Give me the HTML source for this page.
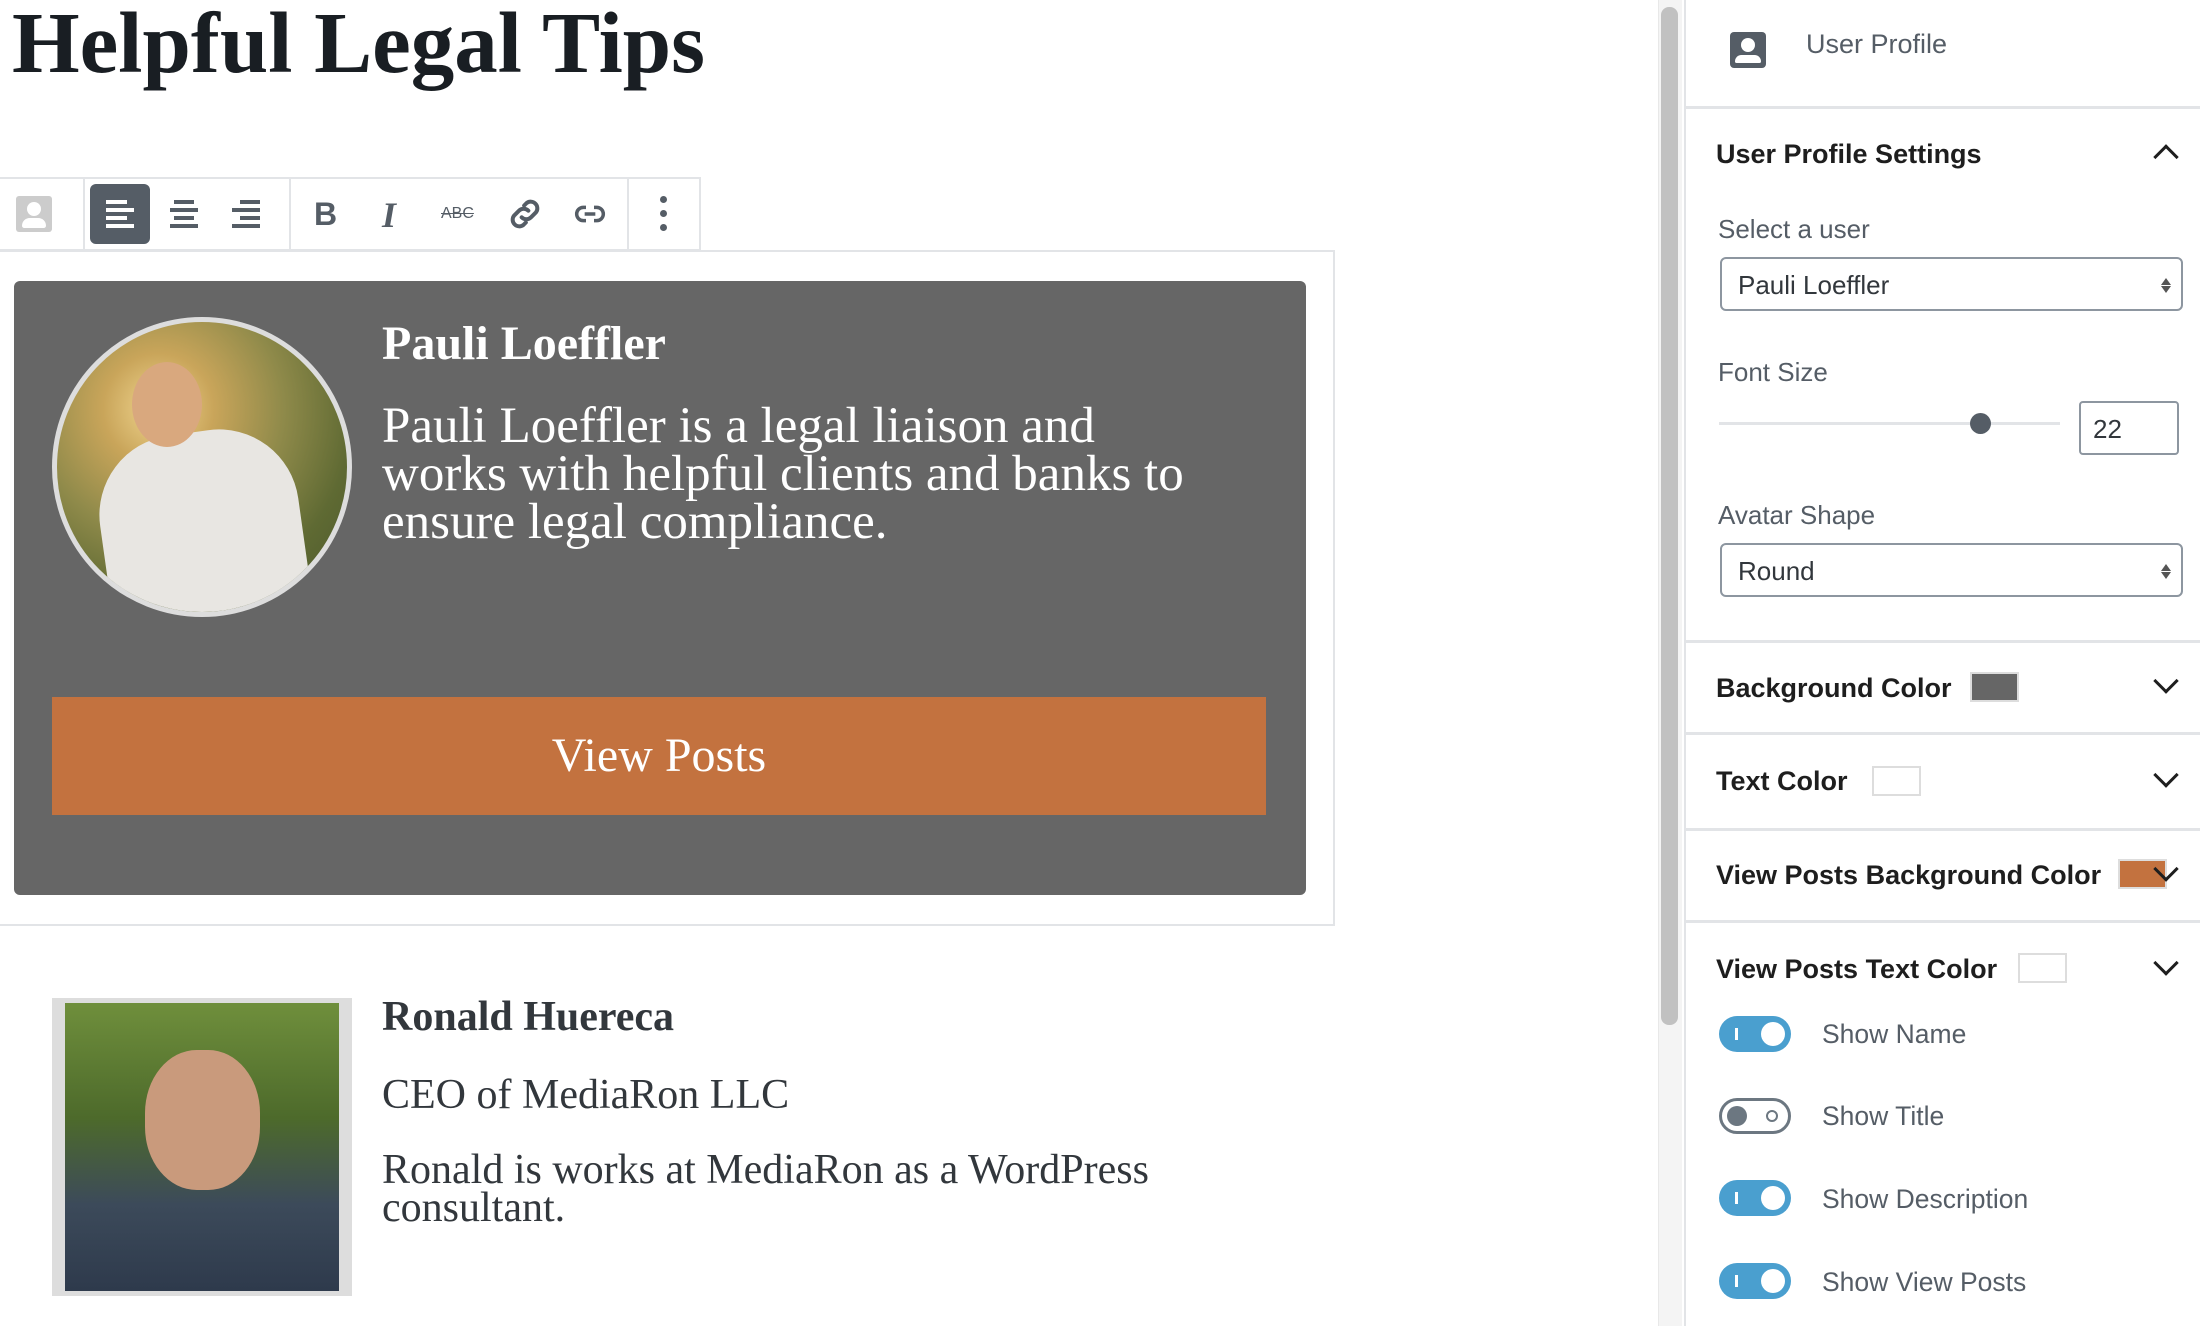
<!DOCTYPE html>
<html><head><meta charset="utf-8"><style>
*{margin:0;padding:0;box-sizing:border-box}
body{width:2200px;height:1326px;overflow:hidden;background:#fff;position:relative;font-family:"Liberation Sans",sans-serif}
.a{position:absolute;white-space:nowrap}
.serif{font-family:"Liberation Serif",serif}
.sb{color:#1e1e1e;font-weight:bold;font-size:27px}
.lbl{color:#555d66;font-size:26px}
.hr{position:absolute;left:1685px;width:515px;height:3px;background:#e2e4e7}
.sel{position:absolute;left:1720px;width:463px;height:54px;border:2px solid #8d96a0;border-radius:6px;font-size:26px;color:#32373c;padding:11px 16px}
.sel:after{content:"";position:absolute;right:10px;top:14px;border:5px solid transparent;border-bottom:7px solid #555;}
.sel:before{content:"";position:absolute;right:10px;top:27px;border:5px solid transparent;border-top:7px solid #555;}
.sw{position:absolute;height:30px;border:2px solid #ddd;width:49px}
.chev{position:absolute;left:2157px;width:18px;height:18px;border-right:3.5px solid #1e1e1e;border-bottom:3.5px solid #1e1e1e;transform:rotate(45deg)}
.tg{position:absolute;left:1719px;width:72px;height:36px;border-radius:18px;background:#4a9fcf}
.tg:after{content:"";position:absolute;right:6px;top:6px;width:24px;height:24px;border-radius:50%;background:#fff}
.tg:before{content:"";position:absolute;left:16px;top:12px;width:3px;height:12px;background:#fff}
.tl{position:absolute;left:1822px;font-size:26.5px;color:#555d66}
</style></head><body>
<div class="a serif" style="left:12px;top:-8px;font-size:87px;font-weight:bold;color:#191e23">Helpful Legal Tips</div>

<div class="a" style="left:0;top:250px;width:1335px;height:676px;border:2px solid #e2e4e7;border-left:none"></div>
<div class="a" style="left:0;top:177px;width:701px;height:74px;border:2px solid #e2e4e7;border-left:none;background:#fff"></div>
<div class="a" style="left:83px;top:179px;width:2px;height:70px;background:#e2e4e7"></div>
<div class="a" style="left:289px;top:179px;width:2px;height:70px;background:#e2e4e7"></div>
<div class="a" style="left:627px;top:179px;width:2px;height:70px;background:#e2e4e7"></div>
<div class="a" style="left:16px;top:196px;width:36px;height:36px;background:#ccc;border-radius:3px"></div>
<div class="a" style="left:27px;top:202px;width:14px;height:14px;background:#fff;border-radius:50%"></div>
<div class="a" style="left:22px;top:218px;width:24px;height:10px;background:#fff;border-radius:10px 10px 3px 3px"></div>
<div class="a" style="left:90px;top:184px;width:60px;height:60px;background:#555d66;border-radius:6px"></div>
<div class="a" style="left:106px;top:200px;width:21px;height:4px;background:#fff"></div>
<div class="a" style="left:106px;top:208px;width:28px;height:4px;background:#fff"></div>
<div class="a" style="left:106px;top:216px;width:21px;height:4px;background:#fff"></div>
<div class="a" style="left:106px;top:224px;width:28px;height:4px;background:#fff"></div>
<div class="a" style="left:174px;top:200px;width:20px;height:4px;background:#555d66"></div>
<div class="a" style="left:170px;top:208px;width:28px;height:4px;background:#555d66"></div>
<div class="a" style="left:174px;top:216px;width:20px;height:4px;background:#555d66"></div>
<div class="a" style="left:170px;top:224px;width:28px;height:4px;background:#555d66"></div>
<div class="a" style="left:240px;top:200px;width:20px;height:4px;background:#555d66"></div>
<div class="a" style="left:232px;top:208px;width:28px;height:4px;background:#555d66"></div>
<div class="a" style="left:240px;top:216px;width:20px;height:4px;background:#555d66"></div>
<div class="a" style="left:232px;top:224px;width:28px;height:4px;background:#555d66"></div>
<div class="a" style="left:314px;top:196px;font-size:32px;font-weight:bold;color:#555d66">B</div>
<div class="a serif" style="left:382px;top:194px;font-size:36px;font-style:italic;font-weight:bold;color:#555d66">I</div>
<div class="a" style="left:441px;top:205px;font-size:16px;color:#555d66;text-decoration:line-through">ABC</div>
<svg class="a" style="left:505px;top:194px" width="40" height="40" viewBox="0 0 24 24"><path d="M10 14a4 4 0 0 0 5.6 0l3-3a4 4 0 0 0-5.6-5.6l-1.5 1.5M14 10a4 4 0 0 0-5.6 0l-3 3a4 4 0 0 0 5.6 5.6l1.5-1.5" fill="none" stroke="#555d66" stroke-width="2.4" stroke-linecap="round"/></svg>
<svg class="a" style="left:574px;top:200px" width="32" height="28" viewBox="0 0 24 20"><path d="M9 5H7a5 5 0 0 0 0 10h2M15 5h2a5 5 0 0 1 0 10h-2M8 10h8" fill="none" stroke="#555d66" stroke-width="2.6"/></svg>
<div class="a" style="left:660px;top:196px;width:7px;height:7px;border-radius:50%;background:#555d66;box-shadow:0 14px 0 #555d66,0 28px 0 #555d66"></div>

<div class="a" style="left:14px;top:281px;width:1292px;height:614px;background:#666;border-radius:6px"></div>
<div class="a" style="left:52px;top:317px;width:300px;height:300px;border-radius:50%;border:5px solid #ddd;overflow:hidden;background:radial-gradient(circle at 35% 30%,#f1d690 0,#c9a55a 20%,#8f8a4a 45%,#5f6a33 70%,#48552a 100%)">
<div style="position:absolute;left:45px;top:110px;width:200px;height:200px;border-radius:40% 40% 10% 10%;background:#e8e6e2;transform:rotate(-8deg)"></div>
<div style="position:absolute;left:75px;top:40px;width:70px;height:85px;border-radius:50%;background:#d9a87e"></div>
</div>
<div class="a serif" style="left:382px;top:316px;font-size:48px;font-weight:bold;color:#fff">Pauli Loeffler</div>
<div class="a serif" style="left:382px;top:402px;font-size:51px;line-height:48px;color:#fff">Pauli Loeffler is a legal liaison and<br>works with helpful clients and banks to<br>ensure legal compliance.</div>
<div class="a" style="left:52px;top:697px;width:1214px;height:118px;background:#c3723f"></div>
<div class="a serif" style="left:52px;top:728px;width:1214px;text-align:center;font-size:48px;color:#fff">View Posts</div>

<div class="a" style="left:52px;top:998px;width:300px;height:298px;background:#ddd;padding:5px 13px"><div style="width:100%;height:100%;background:linear-gradient(180deg,#6f8f3c 0,#4d6a2b 40%,#3c4a5a 70%,#2e3a4c 100%)"></div></div>
<div class="a" style="left:145px;top:1050px;width:115px;height:140px;border-radius:45%;background:#c99a7c"></div>
<div class="a serif" style="left:382px;top:993px;font-size:42px;font-weight:bold;color:#32373c">Ronald Huereca</div>
<div class="a serif" style="left:382px;top:1071px;font-size:42px;color:#32373c">CEO of MediaRon LLC</div>
<div class="a serif" style="left:382px;top:1151px;font-size:42px;line-height:38px;color:#32373c">Ronald is works at MediaRon as a WordPress<br>consultant.</div>

<div class="a" style="left:1658px;top:0;width:24px;height:1326px;background:#f4f4f4;border-left:1px solid #e8e8e8"></div>
<div class="a" style="left:1661px;top:7px;width:17px;height:1018px;background:#c1c1c1;border-radius:8px"></div>
<div class="a" style="left:1684px;top:0;width:2px;height:1326px;background:#e2e4e7"></div>

<div class="a" style="left:1730px;top:32px;width:36px;height:36px;background:#555d66;border-radius:4px"></div>
<div class="a" style="left:1741px;top:38px;width:14px;height:14px;background:#fff;border-radius:50%"></div>
<div class="a" style="left:1735px;top:55px;width:26px;height:8px;background:#fff;border-radius:8px 8px 2px 2px"></div>
<div class="a" style="left:1806px;top:29px;font-size:27px;color:#555d66">User Profile</div>
<div class="hr" style="top:106px"></div>
<div class="a sb" style="left:1716px;top:139px">User Profile Settings</div>
<div class="chev" style="top:148px;transform:rotate(225deg)"></div>
<div class="a lbl" style="left:1718px;top:214px">Select a user</div>
<div class="sel" style="top:257px">Pauli Loeffler</div>
<div class="a lbl" style="left:1718px;top:357px">Font Size</div>
<div class="a" style="left:1719px;top:422px;width:341px;height:3px;background:#e2e4e7"></div>
<div class="a" style="left:1970px;top:413px;width:21px;height:21px;border-radius:50%;background:#555d66"></div>
<div class="a" style="left:2079px;top:401px;width:100px;height:54px;border:2px solid #8d96a0;border-radius:4px;font-size:26px;color:#32373c;padding:11px 12px">22</div>
<div class="a lbl" style="left:1718px;top:500px">Avatar Shape</div>
<div class="sel" style="top:543px">Round</div>
<div class="hr" style="top:640px"></div>
<div class="a sb" style="left:1716px;top:673px">Background Color</div>
<div class="sw" style="left:1970px;top:672px;background:#666"></div>
<div class="chev" style="top:672px"></div>
<div class="hr" style="top:732px"></div>
<div class="a sb" style="left:1716px;top:766px">Text Color</div>
<div class="sw" style="left:1872px;top:766px;background:#fff"></div>
<div class="chev" style="top:766px"></div>
<div class="hr" style="top:828px"></div>
<div class="a sb" style="left:1716px;top:860px">View Posts Background Color</div>
<div class="sw" style="left:2118px;top:859px;background:#c3723f"></div>
<div class="chev" style="top:860px"></div>
<div class="hr" style="top:920px"></div>
<div class="a sb" style="left:1716px;top:954px">View Posts Text Color</div>
<div class="sw" style="left:2018px;top:953px;background:#fff"></div>
<div class="chev" style="top:954px"></div>

<div class="tg" style="top:1016px"></div><div class="tl" style="top:1019px">Show Name</div>
<div class="a" style="left:1719px;top:1098px;width:72px;height:36px;border-radius:18px;border:3px solid #6c7781"></div>
<div class="a" style="left:1727px;top:1106px;width:20px;height:20px;border-radius:50%;background:#6c7781"></div>
<div class="a" style="left:1766px;top:1110px;width:12px;height:12px;border-radius:50%;border:2.5px solid #6c7781"></div>
<div class="tl" style="top:1101px">Show Title</div>
<div class="tg" style="top:1180px"></div><div class="tl" style="top:1184px">Show Description</div>
<div class="tg" style="top:1263px"></div><div class="tl" style="top:1267px">Show View Posts</div>
</body></html>
